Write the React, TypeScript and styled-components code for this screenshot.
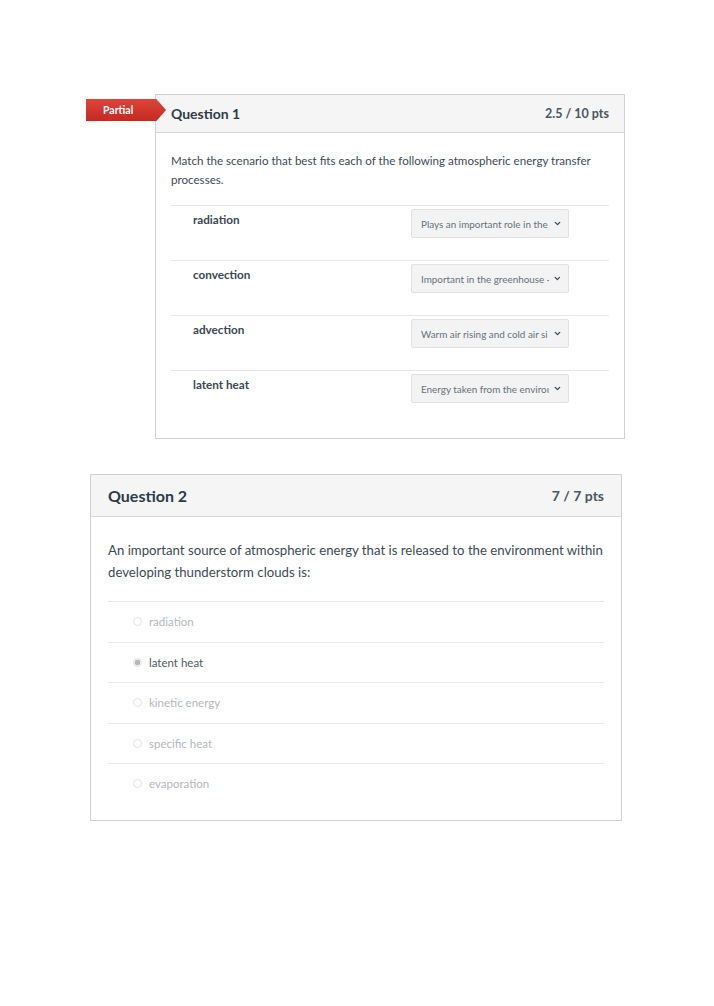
import React from "react";
import styled, { createGlobalStyle } from "styled-components";
import { ChevronDown } from "lucide-react";

const GlobalStyle = createGlobalStyle`
	body {
		margin: 0;
		background: #ffffff;
		font-family: Lato, "Open Sans", "Liberation Sans", sans-serif;
		color: #2d3b45;
	}
`;

const matches = [
	{ term: "radiation", choice: "Plays an important role in the" },
	{ term: "convection", choice: "Important in the greenhouse \u00b7" },
	{ term: "advection", choice: "Warm air rising and cold air si" },
	{ term: "latent heat", choice: "Energy taken from the enviro\u0131" },
];

const answers = [
	{ label: "radiation", picked: false },
	{ label: "latent heat", picked: true },
	{ label: "kinetic energy", picked: false },
	{ label: "specific heat", picked: false },
	{ label: "evaporation", picked: false },
];

const App = () => {
	return (
		<Page>
			<GlobalStyle />
			<QuestionCard $left={155} $width={470}>
				<Badge>Partial</Badge>
				<CardHeader $height={38} $pad={15}>
					<Title $size={14}>Question 1</Title>
					<Points $size={12.5}>2.5 / 10 pts</Points>
				</CardHeader>
				<MatchBody>
					<Prompt $size={11.6} $line={19}>
						Match the scenario that best fits each of the following atmospheric
						energy transfer processes.
					</Prompt>
					<MatchList>
						{matches.map((m) => (
							<MatchRow key={m.term}>
								<Term>{m.term}</Term>
								<Select>
									<SelectText>{m.choice}</SelectText>
									<ChevronDown size={9} strokeWidth={3.5} color="#3b4650" />
								</Select>
							</MatchRow>
						))}
					</MatchList>
				</MatchBody>
			</QuestionCard>

			<QuestionCard $left={90} $width={532} $top={35}>
				<CardHeader $height={42} $pad={17}>
					<Title $size={16}>Question 2</Title>
					<Points $size={14}>7 / 7 pts</Points>
				</CardHeader>
				<ChoiceBody>
					<Prompt $size={13.2} $line={22}>
						An important source of atmospheric energy that is released to the
						environment within developing thunderstorm clouds is:
					</Prompt>
					<AnswerList>
						{answers.map((a) => (
							<AnswerRow key={a.label}>
								<Radio $picked={a.picked} />
								<AnswerText $picked={a.picked}>{a.label}</AnswerText>
							</AnswerRow>
						))}
					</AnswerList>
				</ChoiceBody>
			</QuestionCard>
		</Page>
	);
};

const Page = styled.div`
	padding-top: 94px;
	display: flex;
	flex-direction: column;
	align-items: flex-start;
`;

const QuestionCard = styled.section<{ $left: number; $width: number; $top?: number }>`
	position: relative;
	margin-left: ${(p) => p.$left}px;
	margin-top: ${(p) => p.$top ?? 0}px;
	width: ${(p) => p.$width}px;
	box-sizing: border-box;
	border: 1px solid #cfd2d4;
	background: #fff;
`;

const Badge = styled.div`
	position: absolute;
	left: -70px;
	top: 4px;
	width: 80px;
	height: 22px;
	box-sizing: border-box;
	padding-left: 17px;
	display: flex;
	align-items: center;
	font-size: 10.5px;
	font-weight: 700;
	color: #fff;
	background: linear-gradient(#e0443b, #c42a22);
	clip-path: polygon(0 0, 88% 0, 100% 50%, 88% 100%, 0 100%);
`;

const CardHeader = styled.header<{ $height: number; $pad: number }>`
	height: ${(p) => p.$height - 1}px;
	padding: 0 ${(p) => p.$pad}px;
	display: flex;
	align-items: center;
	justify-content: space-between;
	background: #f5f5f5;
	border-bottom: 1px solid #d6d8da;
`;

const Title = styled.h2<{ $size: number }>`
	margin: 0;
	font-size: ${(p) => p.$size}px;
	font-weight: 700;
	color: #2d3b45;
`;

const Points = styled.span<{ $size: number }>`
	font-size: ${(p) => p.$size}px;
	font-weight: 700;
	color: #4a5660;
`;

const MatchBody = styled.div`
	padding: 18px 15px 13px 15px;
`;

const Prompt = styled.p<{ $size: number; $line: number }>`
	margin: 0;
	font-size: ${(p) => p.$size}px;
	line-height: ${(p) => p.$line}px;
	color: #3e4a53;
`;

const MatchList = styled.div`
	margin-top: 16px;
	display: flex;
	flex-direction: column;
`;

const MatchRow = styled.div`
	height: 55px;
	box-sizing: border-box;
	display: flex;
	justify-content: space-between;
	align-items: flex-start;
	padding: 3px 40px 0 22px;
	border-top: 1px solid #e6e7e8;
`;

const Term = styled.span`
	margin-top: 3px;
	font-size: 11.7px;
	font-weight: 700;
	color: #3b4650;
`;

const Select = styled.div`
	width: 158px;
	height: 29px;
	box-sizing: border-box;
	padding: 0 6px 0 9px;
	display: flex;
	align-items: center;
	justify-content: space-between;
	gap: 4px;
	background: #f3f3f3;
	border: 1px solid #e0e1e2;
	border-radius: 2px;
`;

const SelectText = styled.span`
	font-size: 9.9px;
	color: #66717a;
	white-space: nowrap;
`;

const ChoiceBody = styled.div`
	padding: 22px 17px 16px 17px;
`;

const AnswerList = styled.div`
	margin-top: 18px;
	display: flex;
	flex-direction: column;
`;

const AnswerRow = styled.div`
	height: 40.5px;
	box-sizing: border-box;
	display: flex;
	align-items: center;
	gap: 7px;
	padding-left: 25px;
	border-top: 1px solid #e8e9ea;
`;

const Radio = styled.span<{ $picked: boolean }>`
	width: 9px;
	height: 9px;
	border-radius: 50%;
	box-sizing: border-box;
	border: 1px solid #e2e3e4;
	background: ${(p) =>
		p.$picked ? "radial-gradient(circle, #b5b8ba 0 2.5px, #ececec 3px)" : "#fff"};
`;

const AnswerText = styled.span<{ $picked: boolean }>`
	font-size: 11.5px;
	color: ${(p) => (p.$picked ? "#4f5a62" : "#b4b8bb")};
`;

export default App;
